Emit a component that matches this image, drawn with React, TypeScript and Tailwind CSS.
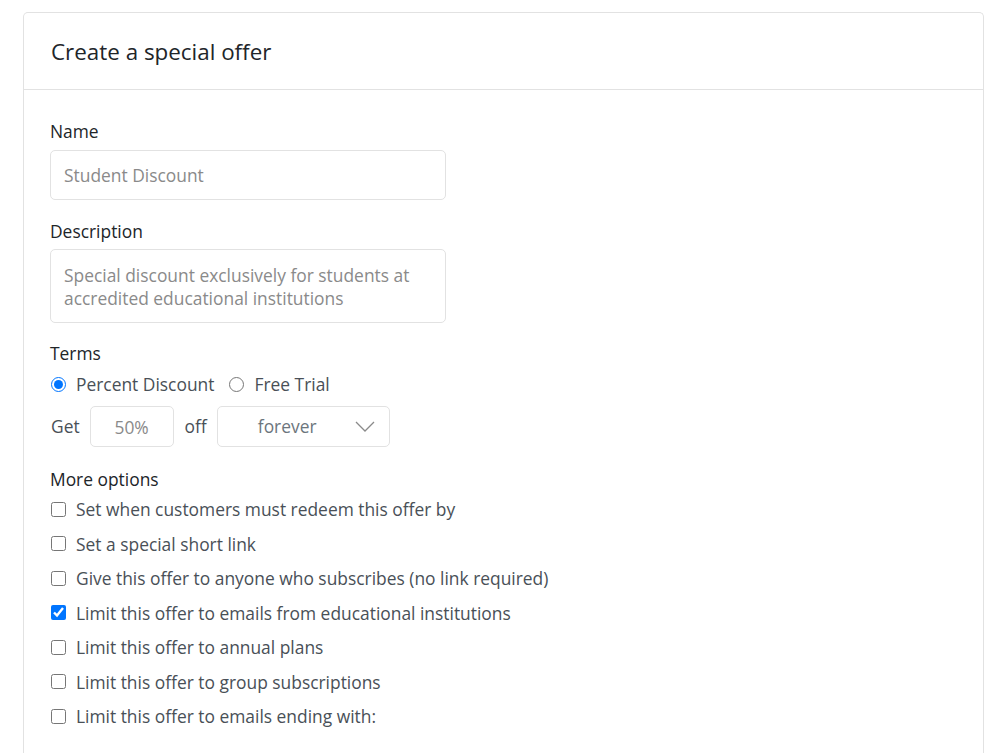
const options = [
  { label: "Set when customers must redeem this offer by", checked: false },
  { label: "Set a special short link", checked: false },
  { label: "Give this offer to anyone who subscribes (no link required)", checked: false },
  { label: "Limit this offer to emails from educational institutions", checked: true },
  { label: "Limit this offer to annual plans", checked: false },
  { label: "Limit this offer to group subscriptions", checked: false },
  { label: "Limit this offer to emails ending with:", checked: false },
];

const Field = ({ label, children }: { label: string; children: React.ReactNode }) => (
  <div className="flex flex-col">
    <label className="text-[17.4px] leading-6 text-[#212529]">{label}</label>
    {children}
  </div>
);

export default function App() {
  return (
    <div
      className="min-h-[753px] bg-white pt-3 pl-[23px]"
      style={{ fontFamily: '"Open Sans", "Noto Sans", sans-serif' }}
    >
      <div className="w-[961px] rounded-t-[5px] border border-b-0 border-[#e2e2e2] pb-6">
        <div className="flex h-[77px] items-center border-b border-[#e2e2e2] px-[27px] pt-[2px]">
          <h1 className="text-[22.4px] leading-none text-[#212529]">Create a special offer</h1>
        </div>

        <div className="flex flex-col px-[26px] pt-[29px]">
          <Field label="Name">
            <input
              readOnly
              placeholder="Student Discount"
              className="mt-[7px] h-[50px] w-[396px] rounded-[5px] border border-[#e2e2e2] px-[13px] text-[17.4px] text-[#495057] outline-none placeholder:text-[#8a8a8a]"
            />
          </Field>

          <div className="mt-[19px]">
            <Field label="Description">
              <textarea
                readOnly
                placeholder="Special discount exclusively for students at accredited educational institutions"
                className="mt-[6px] h-[74px] w-[396px] resize-none rounded-[5px] border border-[#e2e2e2] px-[13px] pt-[14px] text-[17.4px] leading-[23px] text-[#495057] outline-none placeholder:text-[#8a8a8a]"
              />
            </Field>
          </div>

          <div className="mt-[18px] flex flex-col text-[17.4px]">
            <span className="leading-6 text-[#212529]">Terms</span>
            <div className="mt-[7px] flex h-6 items-center text-[#495057]">
              <label className="flex items-center">
                <input type="radio" readOnly checked name="terms" className="m-0 ml-px h-[15px] w-[15px] accent-[#0075ff]" />
                <span className="ml-[10px]">Percent Discount</span>
              </label>
              <label className="ml-[15px] flex items-center">
                <input type="radio" readOnly name="terms" className="m-0 h-[15px] w-[15px] accent-[#0075ff]" />
                <span className="ml-[10px]">Free Trial</span>
              </label>
            </div>
            <div className="mt-[10px] flex items-center text-[#495057]">
              <span className="ml-px">Get</span>
              <input
                readOnly
                placeholder="50%"
                className="ml-[10px] h-[41px] w-[84px] rounded-[5px] border border-[#e2e2e2] text-center outline-none placeholder:text-[#8a8a8a]"
              />
              <span className="ml-[11px]">off</span>
              <div className="ml-[10px] flex h-[41px] w-[173px] items-center rounded-[5px] border border-[#e2e2e2] pl-[40px] pr-[14px]">
                <span className="text-[#6c757d]">forever</span>
                <svg className="ml-auto" width="20" height="11" viewBox="0 0 20 11" fill="none">
                  <polyline points="1,1 10,10 19,1" stroke="#8a8a8a" strokeWidth="1.3" />
                </svg>
              </div>
            </div>
          </div>

          <div className="mt-5 flex flex-col text-[17.4px]">
            <span className="leading-6 text-[#212529]">More options</span>
            <div className="flex flex-col pt-px">
              {options.map((o) => (
                <label key={o.label} className="flex h-[34.5px] items-center text-[#495057]">
                  <input
                    type="checkbox"
                    readOnly
                    checked={o.checked}
                    className="m-0 ml-px h-[15px] w-[15px] accent-[#0075ff]"
                  />
                  <span className="ml-[10px]">{o.label}</span>
                </label>
              ))}
            </div>
          </div>
        </div>
      </div>
    </div>
  );
}
